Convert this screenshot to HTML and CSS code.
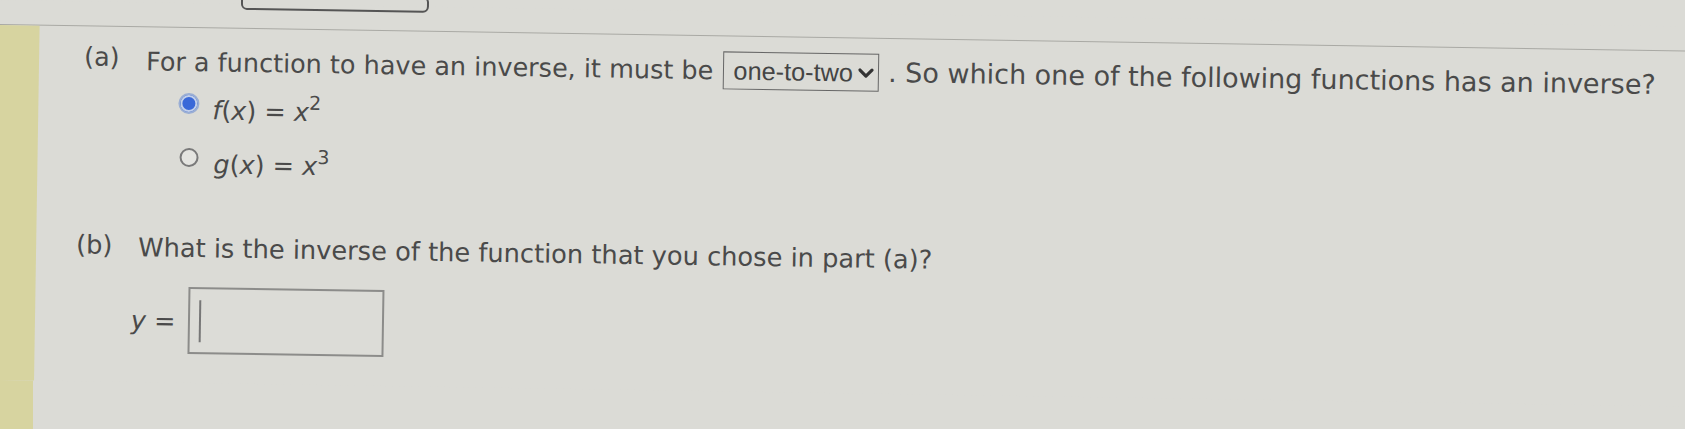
FILE: index.html
```html
<!DOCTYPE html>
<html>
<head>
<meta charset="utf-8">
<link rel="stylesheet" href="styles.css">
</head>
<body>
<div class="page">
  <div class="topbar"><div class="tab"></div></div>
  <div class="main">
    <div class="strip"></div>
    <div class="content">
      <div class="part part-a">
        <span class="label">(a)</span>
        <div class="body">
          <p class="question">For a function to have an inverse, it must be <span class="select"><span class="select-text">one-to-two</span><svg class="chev" width="18" height="13" viewBox="0 0 18 13"><path d="M3 3.5 L9 9.5 L15 3.5" fill="none" stroke="#333" stroke-width="3.2" stroke-linecap="round" stroke-linejoin="round"/></svg></span> <span class="far">. So which one of the following functions has an inverse?</span></p>
          <div class="options">
            <div class="option"><span class="radio checked"></span><span class="math"><i>f</i>(<i>x</i>) = <i>x</i><sup>2</sup></span></div>
            <div class="option"><span class="radio"></span><span class="math"><i>g</i>(<i>x</i>) = <i>x</i><sup>3</sup></span></div>
          </div>
        </div>
      </div>
      <div class="part part-b">
        <span class="label">(b)</span>
        <div class="body">
          <p class="question">What is the inverse of the function that you chose in part (a)?</p>
        </div>
      </div>
      <div class="answer">
        <span class="math"><i>y</i> =</span>
        <span class="input"><span class="caret"></span></span>
      </div>
    </div>
  </div>
</div>
</body>
</html>
```

FILE: styles.css
```css
html, body {
  margin: 0;
  padding: 0;
  overflow: hidden;
}
html {
  background: #dbdbd6 linear-gradient(to right, #d7d4a0 0, #d7d4a0 33px, #dbdbd6 33px) left bottom / 100% 120px no-repeat;
}
body {
  width: 1685px;
  height: 429px;
  font-family: "DejaVu Sans", Verdana, sans-serif;
  color: #4a4a4a;
}
.page {
  width: 1720px;
  height: 380px;
  transform: rotate(0.9deg);
  transform-origin: 0 0;
  background: #dbdbd6;
  display: flex;
  flex-direction: column;
}
.topbar {
  display: flow-root;
  height: 24px;
  border-bottom: 1px solid #a9a9a4;
  flex: none;
}
.tab {
  margin-left: 241px;
  margin-top: -10px;
  width: 188px;
  height: 16px;
  border: 2px solid #555;
  border-radius: 6px;
  box-sizing: border-box;
}
.main {
  display: flex;
  flex: 1;
  min-height: 0;
}
.strip {
  width: 40px;
  background: #d7d4a0;
  flex: none;
}
.content {
  flex: 1;
  padding-left: 45px;
  padding-top: 15px;
}
.part {
  display: flex;
  font-size: 25.5px;
}
.label {
  width: 62px;
  flex: none;
}
.question {
  margin: 0;
  line-height: 34px;
}
.far {
  font-size: 27px;
}
.select {
  display: inline-flex;
  align-items: center;
  gap: 4px;
  border: 1px solid #666;
  height: 38px;
  box-sizing: border-box;
  padding: 0 3px 0 9px;
  margin: 0 1px 0 2px;
}
.select-text {
  font-family: "Liberation Sans", Arial, sans-serif;
  font-size: 25.3px;
  color: #444;
}
.chev {
  display: block;
}
.options {
  display: flex;
  flex-direction: column;
  gap: 20px;
  padding-left: 35px;
  margin-top: 12px;
}
.option {
  display: flex;
  align-items: center;
  gap: 13px;
  height: 34px;
}
.radio {
  width: 19px;
  height: 19px;
  border-radius: 50%;
  border: 2px solid #7a7a7a;
  background: #e4e4e0;
  flex: none;
  margin-top: -14px;
  box-sizing: border-box;
}
.radio.checked {
  width: 21px;
  height: 21px;
  border: 2px solid #9aaed4;
  background: #3a68d8;
  box-shadow: inset 0 0 0 2px #c3d0ea;
  margin-left: -2px;
}
.option:nth-child(2) .math {
  margin-left: 2px;
}
.math {
  font-family: "DejaVu Sans", Verdana, sans-serif;
  font-size: 25.5px;
  color: #4a4a4a;
}
.math i {
  font-style: italic;
}
.math sup {
  font-size: 19px;
  vertical-align: 11px;
  line-height: 0;
}
.part-b {
  margin-top: 50px;
  margin-left: -5px;
  font-size: 25.7px;
}
.answer {
  display: flex;
  align-items: center;
  gap: 12px;
  margin-top: 22px;
  padding-left: 51px;
}
.input {
  width: 196px;
  height: 67px;
  border: 2px solid #8c8c8a;
  box-sizing: border-box;
  background: #dcdcd7;
  display: flex;
  align-items: center;
  padding-left: 9px;
}
.caret {
  width: 2px;
  height: 42px;
  background: #777;
}
```
